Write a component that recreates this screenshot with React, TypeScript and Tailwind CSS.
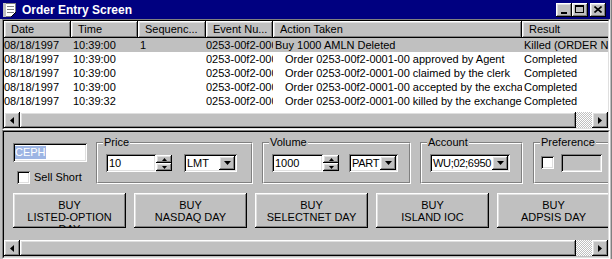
import React from "react";

const raised =
  "shadow-[inset_-1px_-1px_0_#000,inset_1px_1px_0_#fff,inset_-2px_-2px_0_#808080,inset_2px_2px_0_#dfdfdf]";
const sunken =
  "shadow-[inset_1px_1px_0_#808080,inset_-1px_-1px_0_#fff,inset_2px_2px_0_#000,inset_-2px_-2px_0_#dfdfdf]";

const cols = [
  { label: "Date", w: 67 },
  { label: "Time", w: 67 },
  { label: "Sequenc...", w: 68 },
  { label: "Event Nu...", w: 67 },
  { label: "Action Taken", w: 249 },
  { label: "Result", w: 110 },
];

const rows = [
  ["08/18/1997", "10:39:00", "1", "0253-00f2-0001-00", "Buy 1000 AMLN Deleted", "Killed (ORDER NOT FOUND)"],
  ["08/18/1997", "10:39:00", "", "0253-00f2-0001-00", "Order 0253-00f2-0001-00 approved by Agent", "Completed"],
  ["08/18/1997", "10:39:00", "", "0253-00f2-0001-00", "Order 0253-00f2-0001-00 claimed by the clerk", "Completed"],
  ["08/18/1997", "10:39:00", "", "0253-00f2-0001-00", "Order 0253-00f2-0001-00 accepted by the exchange", "Completed"],
  ["08/18/1997", "10:39:32", "", "0253-00f2-0001-00", "Order 0253-00f2-0001-00 killed by the exchange for time", "Completed"],
];

const buttons = [
  ["BUY", "LISTED-OPTION", "DAY"],
  ["BUY", "NASDAQ DAY"],
  ["BUY", "SELECTNET DAY"],
  ["BUY", "ISLAND IOC"],
  ["BUY", "ADPSIS DAY"],
];

function Tri({ dir }: { dir: "left" | "right" | "down" | "up" }) {
  if (dir === "left")
    return (
      <svg width="4" height="7" viewBox="0 0 4 7"><polygon points="4,0 4,7 0,3.5" fill="#000" /></svg>
    );
  if (dir === "right")
    return (
      <svg width="4" height="7" viewBox="0 0 4 7"><polygon points="0,0 0,7 4,3.5" fill="#000" /></svg>
    );
  if (dir === "down")
    return (
      <svg width="7" height="4" viewBox="0 0 7 4"><polygon points="0,0 7,0 3.5,4" fill="#000" /></svg>
    );
  return (
    <svg width="5" height="3" viewBox="0 0 5 3"><polygon points="0,3 5,3 2.5,0" fill="#000" /></svg>
  );
}

function HScroll() {
  return (
    <div className="h-[16px] flex shrink-0">
      <div className={`w-[16px] h-[16px] flex items-center justify-center bg-[#c0c0c0] ${raised}`}>
        <Tri dir="left" />
      </div>
      <div className={`flex-1 bg-[#c0c0c0] ${raised}`} />
      <div className="w-[16px] bg-[repeating-conic-gradient(#c0c0c0_0_25%,#ffffff_0_50%)] bg-[length:2px_2px]" />
      <div className={`w-[16px] h-[16px] flex items-center justify-center bg-[#c0c0c0] ${raised}`}>
        <Tri dir="right" />
      </div>
    </div>
  );
}

function NoteIcon() {
  return (
    <svg width="16" height="16" viewBox="0 0 16 16">
      <rect x="1.5" y="1.5" width="12" height="13" fill="#fff" stroke="#808080" />
      <rect x="1" y="1" width="3" height="14" fill="#c0c0c0" />
      <line x1="5" y1="4.5" x2="12" y2="4.5" stroke="#808080" />
      <line x1="5" y1="7.5" x2="12" y2="7.5" stroke="#808080" />
      <line x1="5" y1="10.5" x2="12" y2="10.5" stroke="#808080" />
      <polygon points="9,15 14,10 14,15" fill="#000080" />
      <line x1="9" y1="15" x2="14" y2="10" stroke="#000" />
    </svg>
  );
}

function TitleBtn({ kind, className = "" }: { kind: "min" | "max" | "close"; className?: string }) {
  return (
    <div className={`w-[16px] h-[14px] bg-[#c0c0c0] flex items-center justify-center ${raised} ${className}`}>
      {kind === "min" && <div className="w-[6px] h-[2px] bg-black mt-[6px] -ml-[1px]" />}
      {kind === "max" && <div className="w-[9px] h-[8px] border border-black border-t-2 -mt-[1px] -ml-[1px]" />}
      {kind === "close" && (
        <svg width="8" height="7" viewBox="0 0 8 7" className="-mt-[1px] -ml-[1px]">
          <path d="M0.5 0.5 L7.5 6.5 M7.5 0.5 L0.5 6.5" stroke="#000" strokeWidth="1.6" />
        </svg>
      )}
    </div>
  );
}

function Checkbox() {
  return <div className={`w-[13px] h-[13px] bg-white shrink-0 ${sunken}`} />;
}

function SpinInput({ value, w }: { value: string; w: number }) {
  return (
    <div className="flex h-[18px]">
      <div className={`h-[18px] bg-white flex items-center pl-[3px] leading-[14px] ${sunken}`} style={{ width: w }}>
        {value}
      </div>
      <div className="w-[16px] flex flex-col py-[1px]">
        <div className={`flex-1 flex items-center justify-center bg-[#c0c0c0] ${raised}`}>
          <Tri dir="up" />
        </div>
        <div className={`flex-1 flex items-center justify-center bg-[#c0c0c0] ${raised}`}>
          <svg width="5" height="3" viewBox="0 0 5 3"><polygon points="0,0 5,0 2.5,3" fill="#000" /></svg>
        </div>
      </div>
    </div>
  );
}

function Combo({ value, w, tight = false }: { value: string; w: number; tight?: boolean }) {
  return (
    <div className={`h-[18px] bg-white flex items-stretch p-[2px] ${sunken}`} style={{ width: w }}>
      <div
        className={`flex-1 flex items-center pl-[1px] leading-[14px] overflow-hidden whitespace-nowrap ${
          tight ? "tracking-[-0.3px]" : ""
        }`}
      >
        {value}
      </div>
      <div className={`w-[16px] flex items-center justify-center bg-[#c0c0c0] ${raised}`}>
        <Tri dir="down" />
      </div>
    </div>
  );
}

function Group({
  label,
  className,
  children,
}: {
  label: string;
  className: string;
  children: React.ReactNode;
}) {
  return (
    <div
      className={`relative mt-[10px] h-[42px] shrink-0 border border-t-[#808080] border-l-[#808080] border-b-white border-r-white ${className}`}
    >
      <div className="h-full border border-t-white border-l-white border-b-[#808080] border-r-[#808080] flex items-start pt-[10px] pl-[8px]">
        {children}
      </div>
      <span className="absolute left-[6px] -top-[8px] bg-[#c0c0c0] px-[1px] leading-[14px]">{label}</span>
    </div>
  );
}

export default function App() {
  return (
    <div className="w-[612px] h-[259px] bg-[#c0c0c0] overflow-hidden flex flex-col pr-[2px] font-['Liberation_Sans',Arial,sans-serif] text-[11px] text-black shadow-[inset_-1px_0_0_#808080]">
      {/* title bar */}
      <div className="h-[19px] shrink-0 bg-[#000080] flex items-center pl-[2px] pr-[4px]">
        <NoteIcon />
        <span className="ml-[4px] text-white font-bold text-[12px] leading-none">Order Entry Screen</span>
        <div className="ml-auto flex items-center">
          <TitleBtn kind="min" />
          <TitleBtn kind="max" />
          <TitleBtn kind="close" className="ml-[2px]" />
        </div>
      </div>

      {/* event list */}
      <div className="ml-[2px] h-[111px] shrink-0 border border-t-[#808080] border-l-[#808080] border-b-white border-r-white">
        <div className="h-full flex flex-col border border-t-black border-l-black border-b-[#dfdfdf] border-r-[#dfdfdf] bg-white">
          <div className="flex-1 overflow-hidden">
            <div className="flex h-[17px]">
              {cols.map((c) => (
                <div
                  key={c.label}
                  className={`shrink-0 h-[17px] bg-[#c0c0c0] pl-[7px] leading-[17px] whitespace-nowrap overflow-hidden ${raised}`}
                  style={{ width: c.w }}
                >
                  {c.label}
                </div>
              ))}
            </div>
            {rows.map((r, i) => (
              <div key={i} className={`flex h-[14px] leading-[14px] ${i === 0 ? "bg-[#c0c0c0]" : "bg-white"}`}>
                {r.map((v, j) => (
                  <div
                    key={j}
                    className={`shrink-0 whitespace-nowrap overflow-hidden ${
                      j === 0 ? "pl-0" : j === 4 ? (i === 0 ? "pl-[2px]" : "pl-[12px]") : j === 3 ? "pl-0" : "pl-[2px]"
                    }`}
                    style={{ width: cols[j].w }}
                  >
                    {v}
                  </div>
                ))}
              </div>
            ))}
          </div>
          <HScroll />
        </div>
      </div>

      {/* order panel */}
      <div className="ml-[2px] flex-1 border border-t-[#808080] border-l-[#808080] border-b-white border-r-white">
        <div className="h-full flex flex-col border border-t-black border-l-black border-b-[#dfdfdf] border-r-[#dfdfdf] overflow-hidden">
          <div className="flex h-[61px] shrink-0 pl-[9px]">
            <div className="w-[74px] shrink-0 flex flex-col">
              <div className={`mt-[11px] h-[19px] bg-white flex items-center pl-[2px] ${sunken}`}>
                <span className="bg-[#9db5e4] text-white leading-[13px]">CEPH</span>
              </div>
              <div className="flex items-center mt-[9px] ml-[4px] gap-[4px]">
                <Checkbox />
                <span className="leading-[13px]">Sell Short</span>
              </div>
            </div>

            <Group label="Price" className="ml-[9px] w-[157px]">
              <SpinInput value="10" w={50} />
              <div className="ml-[12px]">
                <Combo value="LMT" w={53} />
              </div>
            </Group>

            <Group label="Volume" className="ml-[9px] w-[149px]">
              <SpinInput value="1000" w={51} />
              <div className="ml-[10px]">
                <Combo value="PART" w={49} tight />
              </div>
            </Group>

            <Group label="Account" className="ml-[9px] w-[103px]">
              <Combo value="WU;02;6950" w={80} tight />
            </Group>

            <Group label="Preference" className="ml-[10px] w-[90px]">
              <div className="mt-[2px] -ml-[2px]">
                <Checkbox />
              </div>
              <div className={`ml-[7px] w-[41px] h-[18px] bg-[#c0c0c0] ${sunken}`} />
            </Group>
          </div>

          <div className="flex gap-[8px] pl-[9px] h-[35px] shrink-0">
            {buttons.map((b, i) => (
              <div
                key={i}
                className={`w-[113px] h-[35px] shrink-0 overflow-hidden bg-[#c0c0c0] text-center pt-[6px] leading-[12px] ${raised}`}
              >
                {b.map((line) => (
                  <div key={line}>{line}</div>
                ))}
              </div>
            ))}
          </div>

          <div className="mt-[12px]">
            <HScroll />
          </div>
        </div>
      </div>
    </div>
  );
}
